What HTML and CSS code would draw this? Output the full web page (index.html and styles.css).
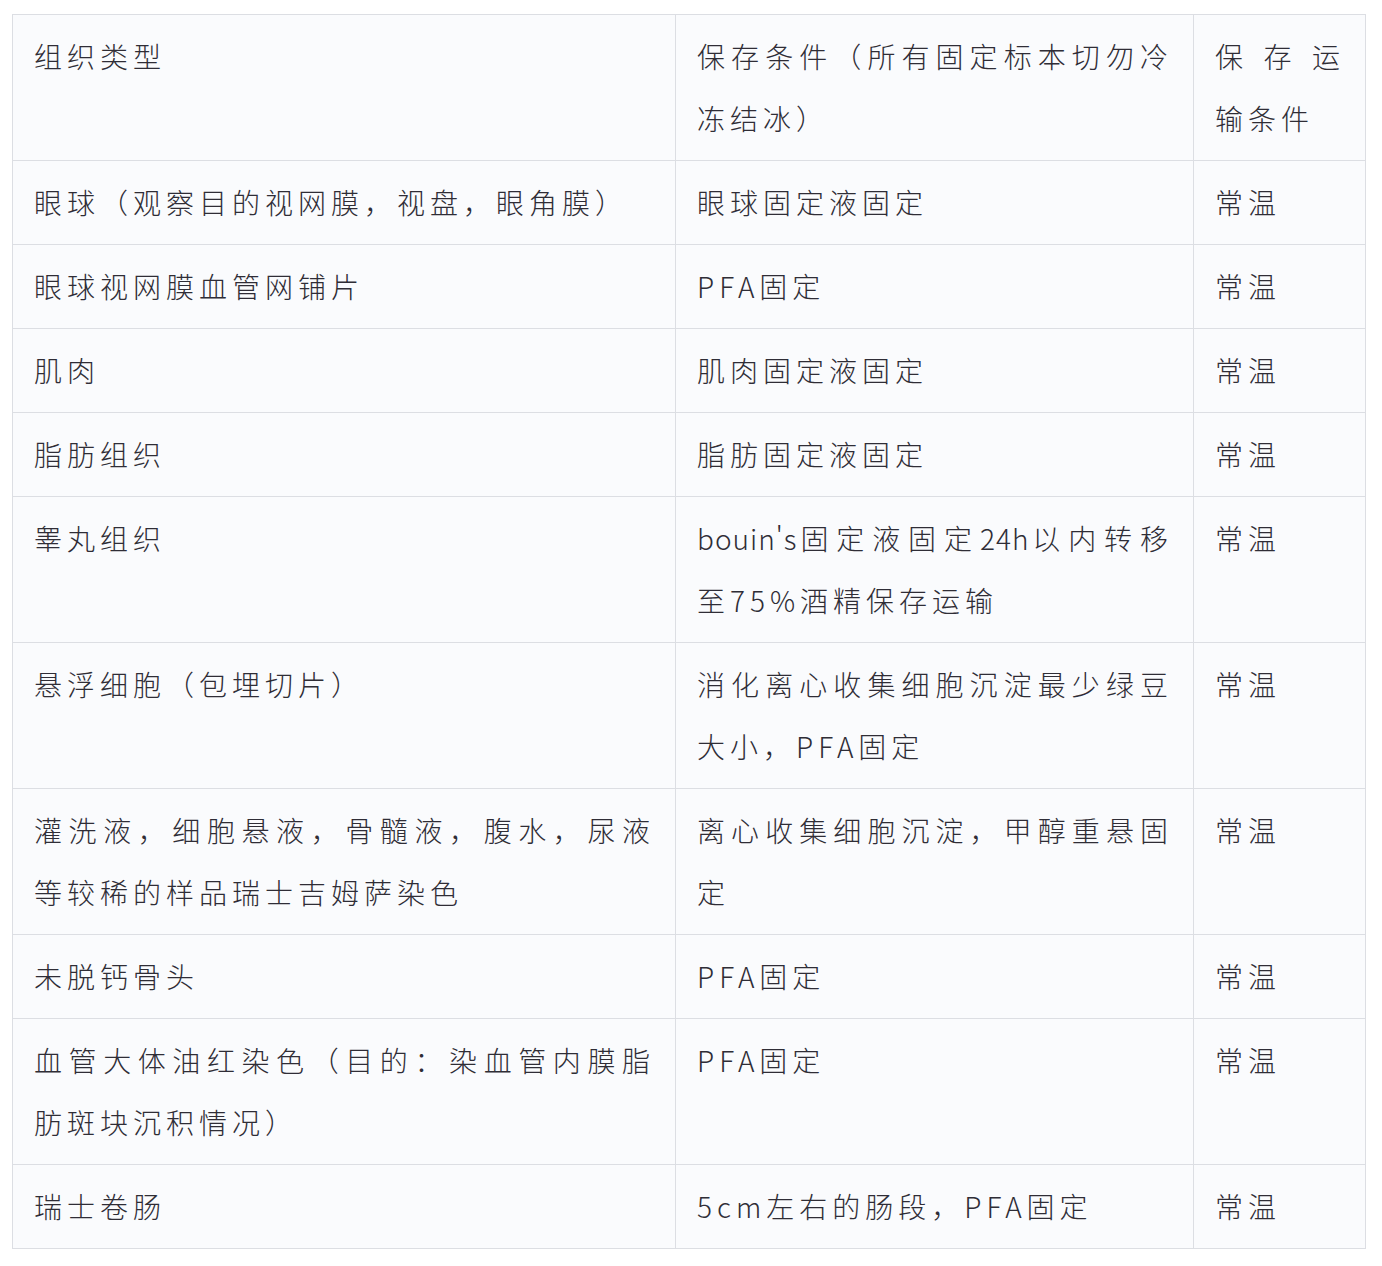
FILE: index.html
```html
<!DOCTYPE html>
<html lang="zh-CN">
<head>
<meta charset="utf-8">
<title>组织类型与保存条件</title>
<link rel="stylesheet" href="styles.css">
</head>
<body>
<div class="frame">
<table class="spec">
  <colgroup>
    <col class="c1">
    <col class="c2">
    <col class="c3">
  </colgroup>
  <tbody>
    <tr><td>组织类型</td><td>保存条件（所有固定标本切勿冷冻结冰）</td><td>保存运输条件</td></tr>
    <tr><td>眼球（观察目的视网膜，视盘，眼角膜）</td><td>眼球固定液固定</td><td>常温</td></tr>
    <tr><td>眼球视网膜血管网铺片</td><td>PFA固定</td><td>常温</td></tr>
    <tr><td>肌肉</td><td>肌肉固定液固定</td><td>常温</td></tr>
    <tr><td>脂肪组织</td><td>脂肪固定液固定</td><td>常温</td></tr>
    <tr><td>睾丸组织</td><td><span class="latin">bouin's</span>固定液固定<span class="latin">24h</span>以内转移至75%酒精保存运输</td><td>常温</td></tr>
    <tr><td>悬浮细胞（包埋切片）</td><td>消化离心收集细胞沉淀最少绿豆大小，PFA固定</td><td>常温</td></tr>
    <tr><td>灌洗液，细胞悬液，骨髓液，腹水，尿液等较稀的样品瑞士吉姆萨染色</td><td>离心收集细胞沉淀，甲醇重悬固定</td><td>常温</td></tr>
    <tr><td>未脱钙骨头</td><td>PFA固定</td><td>常温</td></tr>
    <tr><td>血管大体油红染色（目的：染血管内膜脂肪斑块沉积情况）</td><td>PFA固定</td><td>常温</td></tr>
    <tr><td>瑞士卷肠</td><td>5cm左右的肠段，PFA固定</td><td>常温</td></tr>
  </tbody>
</table>
</div>
</body>
</html>
```

FILE: styles.css
```css
html, body {
  margin: 0;
  padding: 0;
  background: #ffffff;
}

body {
  font-family: "Noto Sans CJK SC", "Noto Sans", sans-serif;
}

.frame {
  padding: 14px 0 0 12px;
}

.spec {
  border-collapse: collapse;
  table-layout: fixed;
  width: 1353px;
  background: #fafbfd;
}

.c1 { width: 663px; }
.c2 { width: 518px; }
.c3 { width: 172px; }

.spec td {
  border: 1px solid #dcdee3;
  padding: 10px 20px 11px 21px;
  vertical-align: top;
  font-size: 28px;
  font-weight: 300;
  letter-spacing: 5px;
  line-height: 62px;
  color: #2f2d36;
  text-align: justify;
  word-break: break-all;
}

.latin {
  letter-spacing: 1px;
}
```
